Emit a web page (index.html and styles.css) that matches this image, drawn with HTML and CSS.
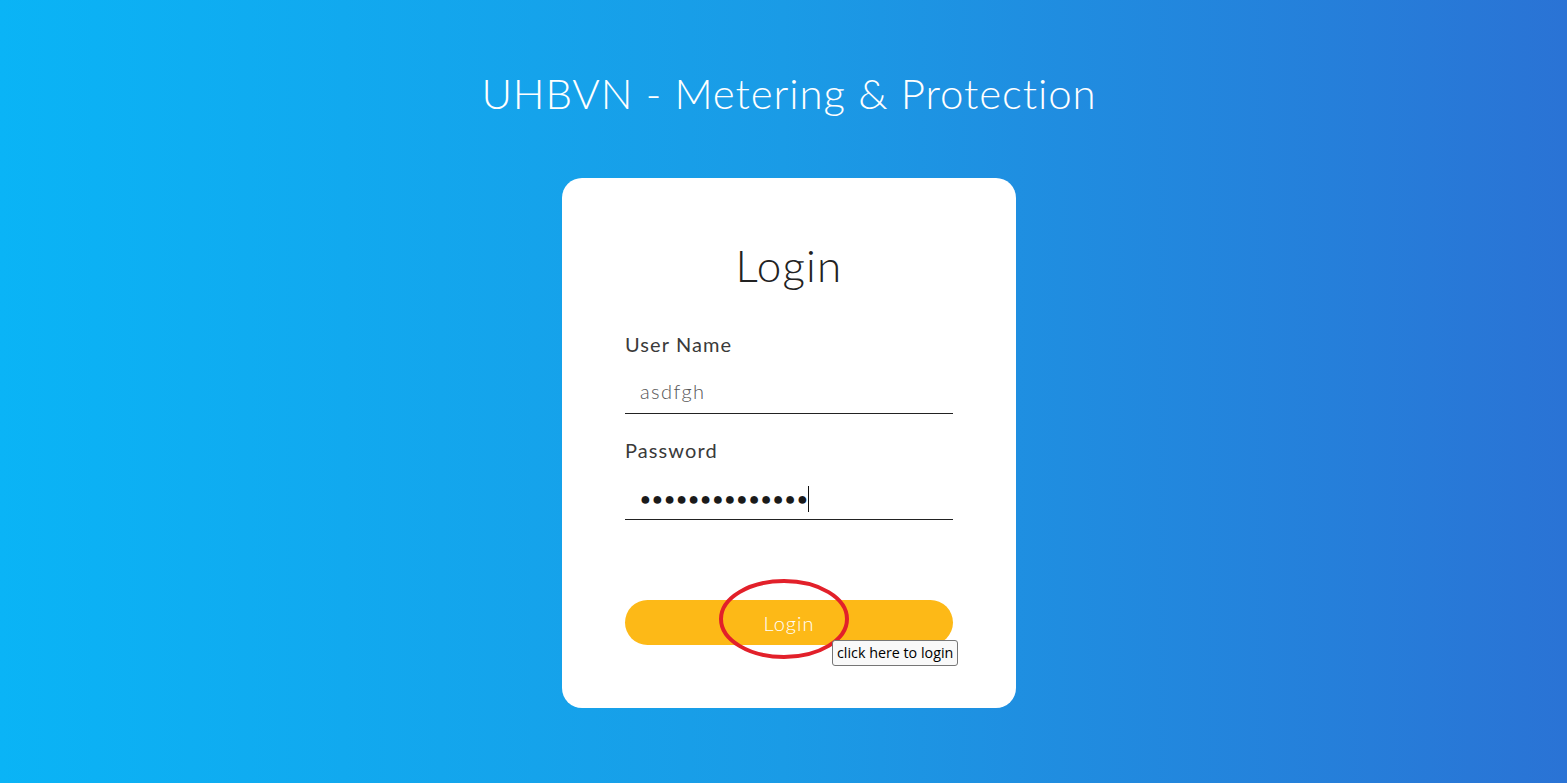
FILE: index.html
```html
<!DOCTYPE html>
<html lang="en">
<head>
<meta charset="utf-8">
<title>UHBVN - Metering &amp; Protection</title>
<link rel="stylesheet" href="styles.css">
</head>
<body>
<main class="page">
  <h1 class="site-title">UHBVN - Metering &amp; Protection</h1>
  <form class="card" onsubmit="return false">
    <h2 class="card-title">Login</h2>
    <label class="field-label" for="user">User Name</label>
    <input class="field-input" id="user" type="text" value="asdfgh">
    <label class="field-label pw-label" for="pw">Password</label>
    <div class="field-input pw-field" id="pw"><span class="dots">●●●●●●●●●●●●●●</span><span class="caret"></span></div>
    <div class="btn-wrap">
      <button class="login-btn" type="submit">Login</button>
      <svg class="mark" width="134" height="84" viewBox="0 0 134 84"><ellipse cx="67" cy="42" rx="63" ry="38" fill="none" stroke="#e2202a" stroke-width="4"/></svg>
      <span class="tooltip">click here to login</span>
    </div>
  </form>
</main>
</body>
</html>
```
FILE: styles.css
```css
html, body {
  margin: 0;
  height: 100%;
}
body {
  background: linear-gradient(to right, #0ab4f6 0%, #1a9be6 50%, #2a73d5 100%);
  font-family: "Lato", "Open Sans", sans-serif;
  overflow: hidden;
}
.page {
  display: flex;
  flex-direction: column;
  align-items: center;
  padding-top: 69px;
  padding-left: 11px;
}
.site-title {
  margin: 0;
  font-weight: 300;
  font-size: 42px;
  line-height: 48px;
  color: #fff;
  letter-spacing: 0.9px;
}
.card {
  margin-top: 61px;
  width: 328px;
  padding: 62px 63px 63px;
  background: #fff;
  border-radius: 20px;
  display: flex;
  flex-direction: column;
}
.card-title {
  margin: 0;
  text-align: center;
  font-weight: 300;
  font-size: 44px;
  line-height: 50px;
  color: #222;
  letter-spacing: 1.2px;
}
.field-label {
  margin-top: 42px;
  font-size: 20px;
  line-height: 24px;
  color: #3a3a3a;
  font-weight: 400;
  letter-spacing: 1.1px;
}
.pw-label {
  margin-top: 24px;
}
.field-input {
  margin-top: 17px;
  box-sizing: border-box;
  height: 41px;
  border: 0;
  border-bottom: 1px solid #222;
  padding: 0 15px 5px;
  font-family: inherit;
  font-size: 20px;
  font-weight: 300;
  color: #555;
  letter-spacing: 1.4px;
  outline: none;
  background: transparent;
  width: 100%;
}
.pw-field {
  display: flex;
  align-items: center;
  color: #1a1a1a;
  padding-bottom: 0;
}
.dots {
  font-size: 18px;
  letter-spacing: 1.2px;
  font-family: "DejaVu Sans", sans-serif;
}
.caret {
  width: 1px;
  height: 26px;
  background: #111;
  margin-left: -1px;
}
.btn-wrap {
  position: relative;
  margin-top: 80px;
}
.login-btn {
  display: block;
  width: 100%;
  height: 45px;
  border: 0;
  border-radius: 23px;
  background: #fdb917;
  color: #fff;
  font-family: inherit;
  font-size: 20px;
  font-weight: 300;
  letter-spacing: 1px;
}
.mark {
  position: absolute;
  left: 92px;
  top: -23px;
}
.tooltip {
  position: absolute;
  left: 207px;
  top: 40px;
  padding: 2px 4px 3px;
  background: #f9f9f9;
  border: 1px solid #767676;
  border-radius: 3px;
  font-family: "Open Sans", sans-serif;
  font-size: 14.3px;
  line-height: 19px;
  color: #000;
  white-space: nowrap;
}
```
